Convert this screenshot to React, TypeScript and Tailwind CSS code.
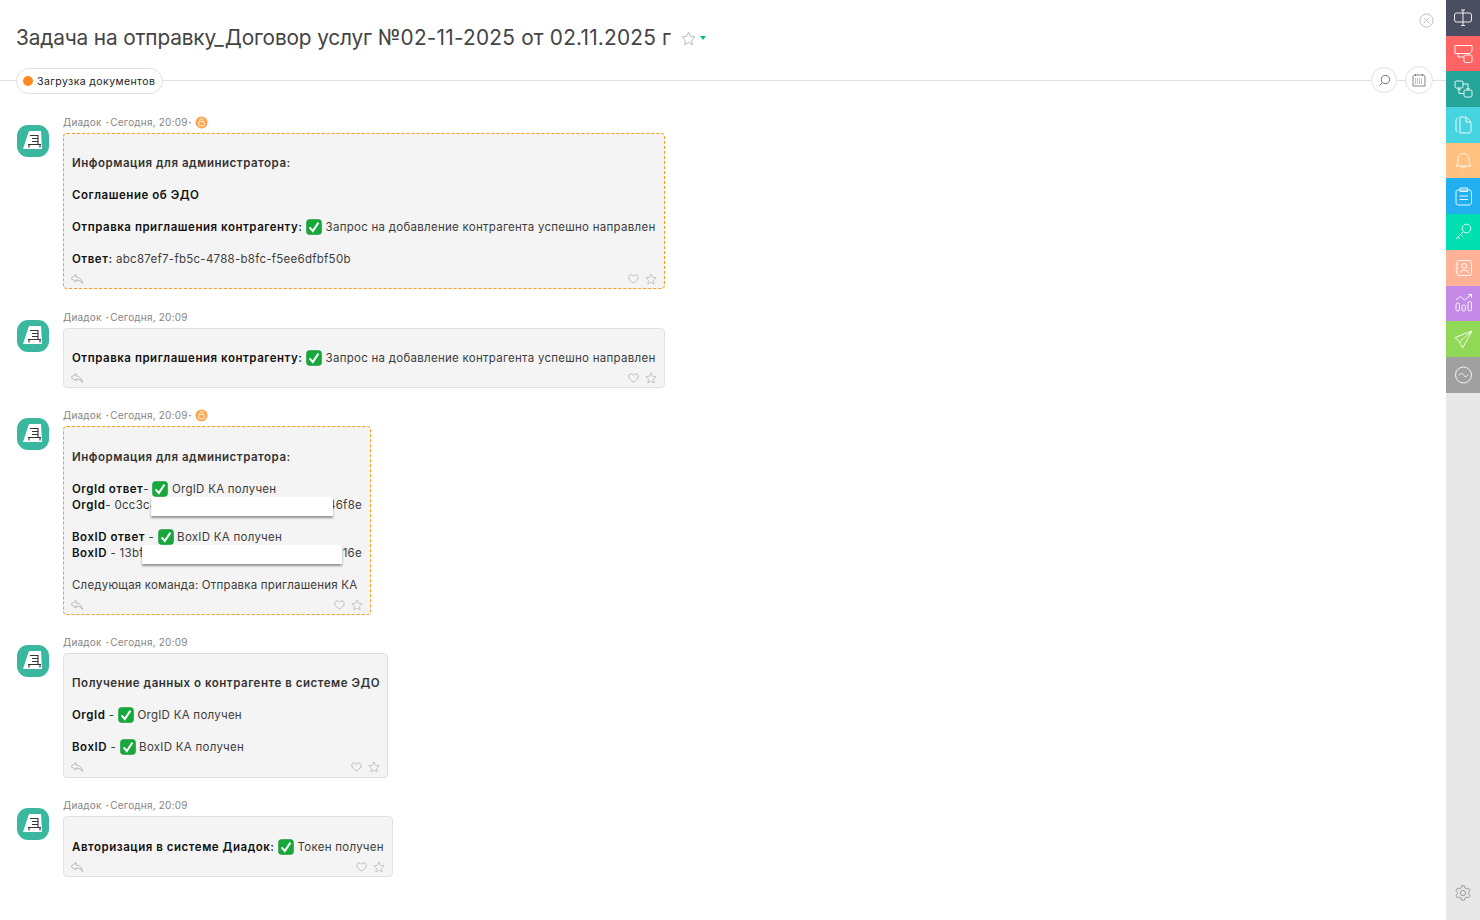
import React from 'react';

type IconProps = { className?: string };

const Check = () => (
  <svg viewBox="0 0 16 16" className="inline-block w-[16px] h-[16px] -my-[3px] align-[-1px]">
    <rect x="0.5" y="0.5" width="15" height="15" rx="3" fill="#17a83c" stroke="#0e8a2e" strokeWidth="0.5" />
    <path d="M3.6 8.4 L6.8 12 L12.4 3.6" fill="none" stroke="#fff" strokeWidth="2" />
  </svg>
);

const Avatar = () => (
  <svg viewBox="0 0 32 32" className="w-[32px] h-[32px] shrink-0">
    <rect x="0" y="0" width="32" height="32" rx="11" fill="#3ab89f" />
    <path d="M12 6 H24 L25 24 H6 Z" fill="#fff" />
    <path d="M13 10.500 H21 V19.500 M15 13.500 H21 M15 16.500 H21 M11 19.500 H24 M12 19.500 V22.500 M23 19.500 V22.500" fill="none" stroke="#333" strokeWidth="1.1" />
  </svg>
);

const Lock = () => (
  <svg viewBox="0 0 14 14" className="w-[13px] h-[13px]">
    <circle cx="7" cy="7" r="6.5" fill="#ffa64d" />
    <rect x="4" y="6" width="6" height="4.5" rx="1" fill="none" stroke="#fff" strokeWidth="0.9" />
    <path d="M5 6 V4.8 a2 2 0 0 1 4 0 V6" fill="none" stroke="#fff" strokeWidth="0.9" />
  </svg>
);

const Reply = () => (
  <svg viewBox="0 0 14 12" className="w-[14px] h-[12px] -ml-[2px]" fill="none" stroke="#b0b0b0" strokeWidth="0.9">
    <path d="M6 1.5 L1 5.5 L6 9 V7 C9 7 11 8 12.5 10.5 C12 7 9.5 4 6 3.8 Z" />
  </svg>
);

const Heart = () => (
  <svg viewBox="0 0 12 11" className="w-[11px] h-[10px]" fill="none" stroke="#b0b0b0" strokeWidth="0.9">
    <path d="M6 10 C3 8 .8 6.200 .8 3.800 C.8 2 2 1 3.300 1 C4.500 1 5.500 1.700 6 2.600 C6.500 1.700 7.500 1 8.700 1 C10 1 11.200 2 11.200 3.800 C11.200 6.200 9 8 6 10 Z" />
  </svg>
);

const Star = ({ className = 'w-[12px] h-[12px]' }: IconProps) => (
  <svg viewBox="0 0 14 14" className={className} fill="none" stroke="#b8b8b8" strokeWidth="0.9">
    <path d="M7 1 L8.800 5 L13 5.500 L9.900 8.400 L10.700 12.800 L7 10.600 L3.300 12.800 L4.100 8.400 L1 5.500 L5.200 5 Z" />
  </svg>
);

const ActionRow = () => (
  <div className="flex items-center justify-between h-[16px] mt-[4px] mb-[1px]">
    <Reply />
    <div className="flex items-center gap-[6px] -mr-[1px]">
      <Heart />
      <Star />
    </div>
  </div>
);

const Meta = ({ lock }: { lock?: boolean }) => (
  <div className="flex items-center h-[14px] mb-[4px] text-[10px] tracking-[0.2px] text-[#858585]">
    <span>Диадок</span>
    <span className="ml-[4px] mr-[1.5px] text-[#555]">·</span>
    <span>Сегодня, 20:09</span>
    {lock && (
      <>
        <span className="mx-[1px] text-[#555]">·</span>
        <span className="ml-[2px]"><Lock /></span>
      </>
    )}
  </div>
);

const Message = ({
  lock,
  dashed,
  width,
  pad = 'pt-[5px]',
  children,
}: {
  lock?: boolean;
  dashed?: boolean;
  width: string;
  pad?: string;
  children: React.ReactNode;
}) => (
  <div className="flex">
    <div className="pl-[17px] pr-[14px] pt-[10px]">
      <Avatar />
    </div>
    <div>
      <Meta lock={lock} />
      <div
        className={`${width} ${pad} relative bg-[#f4f4f4] rounded-[4px] px-[8px] ${
          dashed ? 'border border-dashed border-[#ff9c1a]' : 'border border-[#e0e0e0]'
        }`}
      >
        <div className="text-[11.5px] leading-[16px] tracking-[0.27px] text-[#3c3c3c] whitespace-nowrap">
          <div className="h-[16px]" />
          {children}
        </div>
        <ActionRow />
      </div>
    </div>
  </div>
);

const Blank = () => <div className="h-[16px]" />;
const B = ({ children }: { children: React.ReactNode }) => (
  <b className="font-semibold text-[#111] tracking-[0.53px]">{children}</b>
);
const Heading = ({ children }: { children: React.ReactNode }) => (
  <div className="font-semibold text-[#333] tracking-[0.53px]">{children}</div>
);

const Hide = ({ className }: IconProps) => (
  <div className={`absolute bg-white h-[19px] shadow-[0_2px_2px_rgba(0,0,0,0.4)] ${className}`} />
);

const sideColors = [
  'bg-[#4a4e60]',
  'bg-[#ff6464]',
  'bg-[#26a69a]',
  'bg-[#45d4e0]',
  'bg-[#ffc080]',
  'bg-[#22b0f0]',
  'bg-[#00dfb0]',
  'bg-[#ffb295]',
  'bg-[#c58ae8]',
  'bg-[#90d855]',
  'bg-[#a0a0a0]',
];

const sideIcons: React.ReactNode[] = [
  <>
    <rect x="1.500" y="5" width="17" height="9" rx="2" />
    <path d="M10 2 V17.500 M8 2 H12 M8 17.500 H12" />
  </>,
  <>
    <path d="M2 1.500 H19 V7 L17 9.500 H2 Z" />
    <path d="M5 9.500 V13 H11" />
    <rect x="11" y="11" width="8" height="7.500" rx="1.500" />
  </>,
  <>
    <rect x="2" y="2" width="8" height="7" rx="1.500" />
    <rect x="11" y="11" width="8" height="7" rx="1.500" />
    <path d="M10 5 H15 V10.500 M13.500 9 L15 10.500 L16.500 9 M11 14.500 H6 V9.500 M4.500 11 L6 9.500 L7.500 11" />
  </>,
  <>
    <path d="M4.500 3 C3.500 3.500 3 4.200 3 5.200 V15 C3 16 3.500 16.700 4.500 17" />
    <path d="M7 2 H13 L18 7 V16 C18 17.200 17.200 18 16 18 H7 Z M13 2 V7 H18" />
  </>,
  <>
    <path d="M3 15 C4.500 13.500 5 12 5 8.500 C5 5 7.500 2.500 10.500 2.500 C13.500 2.500 16 5 16 8.500 C16 12 16.500 13.500 18 15 Z" />
    <path d="M8.500 15 C8.500 17.700 12.500 17.700 12.500 15" />
  </>,
  <>
    <path d="M5 4 H16 C17.500 4 18.500 5 18.500 6 V17.500 L16.500 19 H5 L3 17.500 V6 C3 5 3.500 4 5 4 Z" />
    <path d="M7 2 H14.500 V5.500 H7 Z M6.500 10 H15 M6.500 13.500 H15" />
  </>,
  <>
    <circle cx="13.500" cy="6.500" r="4.300" />
    <path d="M10.300 9.700 L3 17 M5 15 L7 17 M7.500 12.500 L9.500 14.500" />
  </>,
  <>
    <rect x="4" y="2.500" width="14.500" height="15" rx="2" />
    <circle cx="11.200" cy="8" r="2.500" />
    <path d="M7 15 C7 11.500 15.500 11.500 15.500 15 M2.500 6 H5 M2.500 10 H5 M2.500 14 H5" />
  </>,
  <>
    <rect x="3" y="10" width="3.500" height="8" rx="1.700" />
    <rect x="9" y="12" width="3.500" height="6" rx="1.700" />
    <rect x="15" y="8.500" width="3.500" height="9.500" rx="1.700" />
    <path d="M3 7 L7.500 3.500 L11.500 7 L18.500 1.500 M15 1.500 H18.500 V5" />
  </>,
  <>
    <path d="M19 2 L2 8.500 L6.500 13 L9.500 19 Z M19 2 L6.500 13" />
  </>,
  <>
    <circle cx="10.500" cy="10" r="8" />
    <path d="M6 10.500 C7.500 7.500 9 8 10.500 10 C12 12 13.500 12.500 15 9.500" />
  </>,
];

const App: React.FC = () => {
  return (
    <div className="w-[1480px] h-[920px] flex overflow-hidden bg-white font-['Inter',sans-serif]">
      <main className="flex-1 min-w-0">
        {/* title */}
        <div className="relative h-[68px]">
          <div className="flex items-center pl-[16px] pt-[24px] h-[52px]">
            <h1 className="text-[20.8px] leading-[28px] text-[#444] whitespace-nowrap">
              <span className="tracking-[-0.15px]">Задача на отправку_Договор услуг </span>
              <span className="tracking-[0.22px]">№02-11-2025 от 02.11.2025 г</span>
            </h1>
            <Star className="w-[15px] h-[15px] ml-[10px]" />
            <div className="ml-[4px] w-0 h-0 border-x-[3.5px] border-x-transparent border-t-[4px] border-t-[#10b98a]" />
          </div>
          <svg viewBox="0 0 16 16" className="absolute right-[12px] top-[13px] w-[15px] h-[15px]" fill="none" stroke="#bdbdbd" strokeWidth="1">
            <circle cx="8" cy="8" r="7" />
            <path d="M5 5 L11 11 M11 5 L5 11" />
          </svg>
        </div>

        {/* status line */}
        <div className="relative flex items-center justify-between h-[26px] pl-[16px] pr-[13px]">
          <div className="absolute left-0 right-0 top-[12px] h-px bg-[#e0e0e0]" />
          <div className="relative flex items-center h-[26px] pl-[6px] pr-[7px] gap-[4px] bg-white border border-[#e2e2e2] rounded-full text-[10.5px] tracking-[0.4px] text-[#222]">
            <span className="w-[10px] h-[10px] rounded-full bg-[#ff8a1f]" />
            <span className="pt-[1px]">Загрузка документов</span>
          </div>
          <div className="relative flex items-center gap-[8px] mb-[2px]">
            <div className="w-[26px] h-[26px] rounded-full bg-white border border-[#e2e2e2] flex items-center justify-center">
              <svg viewBox="0 0 14 14" className="w-[13px] h-[13px]" fill="none" stroke="#555" strokeWidth="0.9">
                <circle cx="8" cy="6" r="4.500" />
                <path d="M4.800 9.200 L1.500 12.500" />
              </svg>
            </div>
            <div className="w-[28px] h-[28px] rounded-full bg-white border border-[#e2e2e2] flex items-center justify-center">
              <svg viewBox="0 0 14 14" className="w-[14px] h-[14px]" fill="none" stroke="#666" strokeWidth="0.8">
                <path d="M3 2 H11 C12.300 2 13 2.800 13 4 V13 H1 V4 C1 2.800 1.700 2 3 2 Z" />
                <path d="M3.500 1 V3 M10.500 1 V3" />
                <path d="M3 6 H11 M3 8 H11 M3 10 H11" strokeDasharray="1 1" />
              </svg>
            </div>
          </div>
        </div>

        {/* messages */}
        <div className="flex flex-col gap-[20px] pt-[21px]">
          <div className="flex flex-col gap-[21px]">
            <Message lock dashed width="w-[602px]">
              <Heading>Информация для администратора:</Heading>
              <Blank />
              <B>Соглашение об ЭДО</B>
              <Blank />
              <B>Отправка приглашения контрагенту:</B> <Check /> Запрос на добавление контрагента успешно направлен
              <Blank />
              <B>Ответ:</B> abc87ef7-fb5c-4788-b8fc-f5ee6dfbf50b
            </Message>

            <Message width="w-[602px]">
              <B>Отправка приглашения контрагенту:</B> <Check /> Запрос на добавление контрагента успешно направлен
            </Message>
          </div>

          <Message lock dashed width="w-[308px]" pad="pt-[6px]">
            <Heading>Информация для администратора:</Heading>
            <Blank />
            <div><B>OrgId ответ</B>- <Check /> OrgID КА получен</div>
            <div className="flex justify-between"><span><B>OrgId</B>- 0cc3c4</span><span>46f8e</span></div>
            <Blank />
            <div><B>BoxID ответ</B> - <Check /> BoxID КА получен</div>
            <div className="flex justify-between"><span><B>BoxID</B> - 13bf</span><span>16e</span></div>
            <Blank />
            <div className="tracking-[0.2px]">Следующая команда: Отправка приглашения КА</div>
            <Hide className="left-[87px] top-[70px] w-[182px]" />
            <Hide className="left-[78px] top-[118px] w-[200px]" />
          </Message>

          <Message width="w-[325px]" pad="pt-[5px] pb-[1px]">
            <Heading>Получение данных о контрагенте в системе ЭДО</Heading>
            <Blank />
            <div><B>OrgId</B> - <Check /> OrgID КА получен</div>
            <Blank />
            <div><B>BoxID</B> - <Check /> BoxID КА получен</div>
          </Message>

          <Message width="w-[330px]" pad="pt-[6px]">
            <B>Авторизация в системе Диадок:</B> <Check /> Токен получен
          </Message>
        </div>
      </main>

      <aside className="w-[34px] shrink-0 bg-[#e8e8e8] flex flex-col">
        {sideColors.map((c, i) => (
          <div key={c} className={`${c} h-[35.7px] flex items-center justify-center`}>
            <svg viewBox="0 0 20 20" className="w-[20px] h-[20px]" fill="none" stroke="#fff" strokeWidth="1" strokeOpacity="0.9">
              {sideIcons[i]}
            </svg>
          </div>
        ))}
        <div className="mt-auto h-[55px] flex items-center justify-center">
          <svg viewBox="0 0 24 24" className="w-[18px] h-[18px]" fill="none" stroke="#999" strokeWidth="1.300">
            <circle cx="12" cy="12" r="3.500" />
            <path d="M10 2.500 H14 L14.600 5.300 L16.700 6.500 L19.400 5.600 L21.400 9 L19.300 11 V13 L21.400 15 L19.400 18.400 L16.700 17.500 L14.600 18.700 L14 21.500 H10 L9.400 18.700 L7.300 17.500 L4.600 18.400 L2.600 15 L4.700 13 V11 L2.600 9 L4.600 5.600 L7.300 6.500 L9.400 5.300 Z" />
          </svg>
        </div>
      </aside>
    </div>
  );
};

export default App;
